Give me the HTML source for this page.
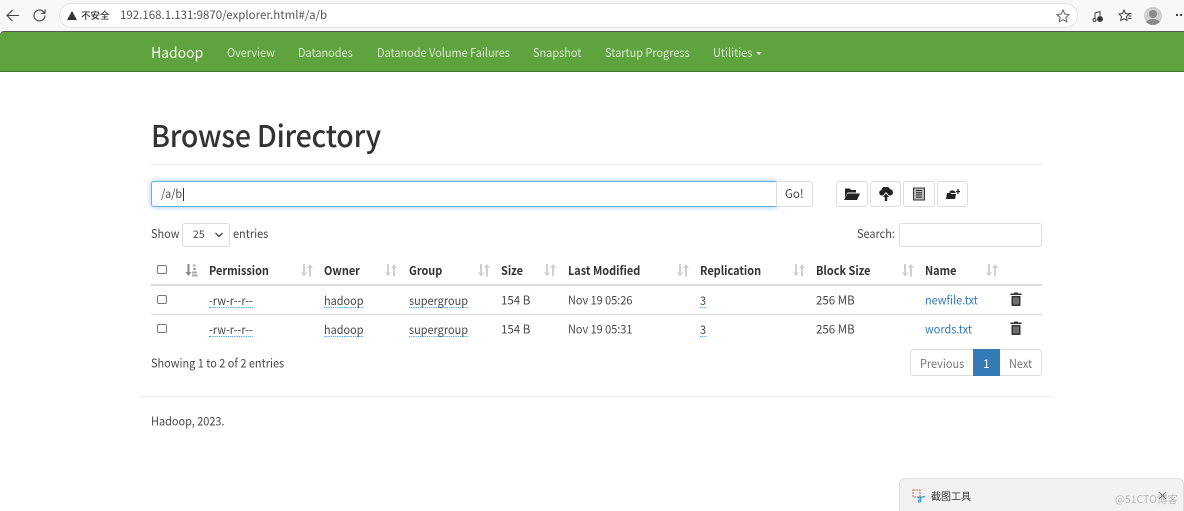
<!DOCTYPE html>
<html><head><meta charset="utf-8"><style>
*{box-sizing:border-box}
html,body{margin:0;padding:0;width:1184px;height:511px;overflow:hidden;background:#fff}
body{font-family:"Noto Sans CJK SC","Liberation Sans",sans-serif;font-size:12px;color:#484848;position:relative}
#w{position:absolute;left:0;top:0;width:1184px;height:511px;filter:blur(.35px)}
.t{position:absolute;white-space:nowrap;line-height:16px;height:16px;transform:scaleX(.91);transform-origin:left center}
.h{transform:translateY(-.5px) scaleX(.91)}
.r{transform:none}
.m{transform:translateY(-.5px) scaleX(.96)}
.b{font-weight:700;color:#333}
.u{border-bottom:1px dotted #2f9be8;line-height:13px;height:14px}
.l{color:#337ab7}
.n{color:#d8e8d0}
.btn{position:absolute;top:181px;height:26px;background:#fff;border:1px solid #ddd;border-radius:3px}
.btn svg{position:absolute;left:50%;top:50%;transform:translate(-50%,-50%)}
.cb{position:absolute;left:157px;width:10px;height:9px;border:1px solid #777;border-radius:2px;background:#fff}
.hr{position:absolute;height:1px}
.s{position:absolute;top:264px}
</style></head><body><div id="w">
<div style="position:absolute;left:0;top:0;width:1184px;height:31px;background:#f7f8f8"></div>
<svg style="position:absolute;left:5px;top:8px" width="16" height="15" viewBox="0 0 16 15" fill="none" stroke="#444" stroke-width="1.1"><path d="M14 7.500H2M7.500 2 2 7.500 7.500 13"/></svg>
<svg style="position:absolute;left:32px;top:8px" width="16" height="15" viewBox="0 0 16 15" fill="none" stroke="#444" stroke-width="1.1"><path d="M13 7.500a5.500 5.500 0 1 1-1.600-3.900L13 5.200M13 1.500v3.800H9.300"/></svg>
<div style="position:absolute;left:59px;top:3px;width:1019px;height:25px;background:#fff;border:1px solid #e2e3e4;border-radius:13px"></div>
<svg style="position:absolute;left:67px;top:11px" width="10" height="9" viewBox="0 0 10 9"><path d="M5 0 10 9H0z" fill="#333"/></svg>
<div class="t r" style="left:81px;top:7px;font-size:9.500px;font-weight:500;color:#333">不安全</div>
<div class="t r" style="left:120px;top:7px;font-size:11.500px;color:#555">192.168.1.131:9870/explorer.html#/a/b</div>
<svg style="position:absolute;left:1056px;top:9px" width="14" height="14" viewBox="0 0 14 14" fill="none" stroke="#666"><path d="M7 1 8.800 5 13 5.500 9.900 8.400 10.800 12.800 7 10.600 3.200 12.800 4.100 8.400 1 5.500 5.200 5z"/></svg>
<svg style="position:absolute;left:1092px;top:10px" width="12" height="13" viewBox="0 0 12 13" fill="none" stroke="#444"><path d="M3 9V3l5-1.500V7"/><circle cx="2.500" cy="10" r="1.500"/><circle cx="8" cy="9" r="2.500" fill="#333"/></svg>
<svg style="position:absolute;left:1118px;top:9px" width="14" height="14" viewBox="0 0 14 14" fill="none" stroke="#444"><path d="M6 1 7.500 4.500 11 5 8.500 7.500 9 11.500 6 9.800 2.800 11.500 3.500 7.500 1 5 4.500 4.500zM10 4.500h3.500M10.500 7h3M10 9.500h3.500"/></svg>
<div style="position:absolute;left:1144px;top:7px;width:18px;height:18px;border-radius:50%;background:#cfcfcf;overflow:hidden"><div style="position:absolute;left:5px;top:3px;width:8px;height:8px;border-radius:50%;background:#8a8a8a"></div><div style="position:absolute;left:2px;top:12px;width:14px;height:8px;border-radius:50%;background:#8a8a8a"></div></div>
<div style="position:absolute;left:1176px;top:14px;width:2px;height:2px;background:#444;box-shadow:4px 0 #444"></div>

<div style="position:absolute;left:0;top:31px;width:1184px;height:41px;background:#5fa33e;border-top:1px solid #555;border-bottom:1px solid #3f7a2a;border-radius:4px 0 0 0"></div>
<div class="t" style="left:151px;top:44px;font-size:15px;color:#f2f7ef;line-height:18px;height:18px;transform:scaleX(.93)">Hadoop</div>
<div class="t n" style="left:227px;top:45px">Overview</div>
<div class="t n" style="left:298px;top:45px">Datanodes</div>
<div class="t n" style="left:377px;top:45px">Datanode Volume Failures</div>
<div class="t n" style="left:533px;top:45px">Snapshot</div>
<div class="t n" style="left:604.500px;top:45px">Startup Progress</div>
<div class="t n" style="left:713px;top:45px">Utilities</div>
<div style="position:absolute;left:756px;top:52px;border:3.500px solid transparent;border-top-color:#d8e8d0;border-bottom:0"></div>

<div class="t" style="left:151px;top:112px;font-size:30px;line-height:44px;height:44px;color:#333;transform:scaleX(.95);font-weight:500;letter-spacing:-.25px">Browse Directory</div>
<div class="hr" style="left:151px;top:164px;width:891px;background:#eee"></div>

<div style="position:absolute;left:151px;top:181px;width:626px;height:26px;border:1px solid #66afe9;border-radius:3px 0 0 3px;box-shadow:0 0 6px rgba(102,175,233,.7);background:#fff"></div>
<div class="t" style="left:161px;top:186px">/a/b</div>
<div style="position:absolute;left:183px;top:188px;width:1px;height:13px;background:#333"></div>
<div class="btn" style="left:776px;width:37px;border-radius:0 3px 3px 0"></div>
<div class="t m" style="left:785px;top:186px;transform:scaleX(.96)">Go!</div>

<div class="btn" style="left:836px;width:32px"><svg width="16" height="13" viewBox="0 0 16 13"><path d="M1 1h5l1 1.500h5V5H3.500L1 10zM3.500 6H16l-3 6.500H0z" fill="#222"/></svg></div>
<div class="btn" style="left:870px;width:31px"><svg width="15" height="14" viewBox="0 0 15 14"><path d="M3 8.500A2.800 2.800 0 0 1 3 3a4.500 4.500 0 0 1 8.500-.800A3.200 3.200 0 0 1 12 8.500H10.500L7.500 5 4.500 8.500z" fill="#222"/><path d="M7.500 6.500 10.500 10H8.700V14H6.300V10H4.500z" fill="#222"/></svg></div>
<div class="btn" style="left:903px;width:32px"><svg width="12" height="13" viewBox="0 0 12 13"><path d="M.5.500h11v12H.5z" fill="#bbb" stroke="#333"/><path d="M3 3h6M3 5.200h6M3 7.400h6M3 9.600h6" stroke="#222"/></svg></div>
<div class="btn" style="left:937px;width:31px"><svg width="14" height="12" viewBox="0 0 14 12"><path d="M1 5h3.500l1 1h4.500L9 11H0z" fill="#222"/><path d="M3 4.500C3.500 3 6 1.500 8.500 3L10 5H6z" fill="#222"/><path d="M12 1v5M10 3.500H14" stroke="#222" stroke-width="1.300"/></svg></div>

<div class="t" style="left:151px;top:226px">Show</div>
<div style="position:absolute;left:182px;top:223px;width:48px;height:24px;border:1px solid #ddd;border-radius:3px"></div>
<div class="t r" style="left:193px;top:227px;font-size:10.500px">25</div>
<svg style="position:absolute;left:215px;top:232px" width="8" height="6" viewBox="0 0 8 6" fill="none" stroke="#444" stroke-width="1.300"><path d="M.5 1 4 4.500 7.500 1"/></svg>
<div class="t" style="left:233px;top:226px">entries</div>
<div class="t" style="left:857px;top:226px">Search:</div>
<div style="position:absolute;left:899px;top:223px;width:143px;height:24px;border:1px solid #ddd;border-radius:3px"></div>

<div class="cb" style="top:265px"></div>
<svg class="s" style="left:185px" width="13" height="13" viewBox="0 0 13 13"><path d="M3.500 0v8" stroke="#888" stroke-width="2"/><path d="M.5 8h6L3.500 12z" fill="#888"/><path d="M8 1.500h2.500M8 5h3M7 8.500h5M7 11.500h5.500" stroke="#aaa" stroke-width="2"/></svg>
<div class="t b" style="left:209px;top:263px">Permission</div>
<div class="t b" style="left:324px;top:263px">Owner</div>
<div class="t b" style="left:409px;top:263px">Group</div>
<div class="t b" style="left:501px;top:263px">Size</div>
<div class="t b" style="left:568px;top:263px">Last Modified</div>
<div class="t b" style="left:700px;top:263px">Replication</div>
<div class="t b" style="left:816px;top:263px">Block Size</div>
<div class="t b" style="left:925px;top:263px">Name</div>
<svg class="s" style="left:301px" width="12" height="13" viewBox="0 0 12 13"><path d="M3 0v9" stroke="#d0d0d0" stroke-width="2"/><path d="M0 8.500h6L3 12.500z" fill="#d0d0d0"/><path d="M9 12.500V4" stroke="#d0d0d0" stroke-width="2"/><path d="M6 4h6L9 0z" fill="#d0d0d0"/></svg>
<svg class="s" style="left:385px" width="12" height="13" viewBox="0 0 12 13"><path d="M3 0v9" stroke="#d0d0d0" stroke-width="2"/><path d="M0 8.500h6L3 12.500z" fill="#d0d0d0"/><path d="M9 12.500V4" stroke="#d0d0d0" stroke-width="2"/><path d="M6 4h6L9 0z" fill="#d0d0d0"/></svg>
<svg class="s" style="left:478px" width="12" height="13" viewBox="0 0 12 13"><path d="M3 0v9" stroke="#d0d0d0" stroke-width="2"/><path d="M0 8.500h6L3 12.500z" fill="#d0d0d0"/><path d="M9 12.500V4" stroke="#d0d0d0" stroke-width="2"/><path d="M6 4h6L9 0z" fill="#d0d0d0"/></svg>
<svg class="s" style="left:544px" width="12" height="13" viewBox="0 0 12 13"><path d="M3 0v9" stroke="#d0d0d0" stroke-width="2"/><path d="M0 8.500h6L3 12.500z" fill="#d0d0d0"/><path d="M9 12.500V4" stroke="#d0d0d0" stroke-width="2"/><path d="M6 4h6L9 0z" fill="#d0d0d0"/></svg>
<svg class="s" style="left:677px" width="12" height="13" viewBox="0 0 12 13"><path d="M3 0v9" stroke="#d0d0d0" stroke-width="2"/><path d="M0 8.500h6L3 12.500z" fill="#d0d0d0"/><path d="M9 12.500V4" stroke="#d0d0d0" stroke-width="2"/><path d="M6 4h6L9 0z" fill="#d0d0d0"/></svg>
<svg class="s" style="left:793px" width="12" height="13" viewBox="0 0 12 13"><path d="M3 0v9" stroke="#d0d0d0" stroke-width="2"/><path d="M0 8.500h6L3 12.500z" fill="#d0d0d0"/><path d="M9 12.500V4" stroke="#d0d0d0" stroke-width="2"/><path d="M6 4h6L9 0z" fill="#d0d0d0"/></svg>
<svg class="s" style="left:902px" width="12" height="13" viewBox="0 0 12 13"><path d="M3 0v9" stroke="#d0d0d0" stroke-width="2"/><path d="M0 8.500h6L3 12.500z" fill="#d0d0d0"/><path d="M9 12.500V4" stroke="#d0d0d0" stroke-width="2"/><path d="M6 4h6L9 0z" fill="#d0d0d0"/></svg>
<svg class="s" style="left:986px" width="12" height="13" viewBox="0 0 12 13"><path d="M3 0v9" stroke="#d0d0d0" stroke-width="2"/><path d="M0 8.500h6L3 12.500z" fill="#d0d0d0"/><path d="M9 12.500V4" stroke="#d0d0d0" stroke-width="2"/><path d="M6 4h6L9 0z" fill="#d0d0d0"/></svg>
<div class="hr" style="left:151px;top:284px;width:891px;height:2px;background:#ddd"></div>

<div class="cb" style="top:295px"></div>
<div class="t u" style="left:209px;top:294px">-rw-r--r--</div>
<div class="t u" style="left:324px;top:294px">hadoop</div>
<div class="t u" style="left:409px;top:294px">supergroup</div>
<div class="t m" style="left:501px;top:293px">154 B</div>
<div class="t h" style="left:568px;top:293px">Nov 19 05:26</div>
<div class="t u" style="left:700px;top:294px">3</div>
<div class="t m" style="left:816px;top:293px">256 MB</div>
<div class="t l h" style="left:925px;top:293px">newfile.txt</div>
<svg style="position:absolute;left:1010px;top:292px" width="12" height="14" viewBox="0 0 12 14"><path d="M4 1.500V.5h4v1h3.500V3H.5V1.500zM1.500 4h9v9a1 1 0 0 1-1 1h-7a1 1 0 0 1-1-1z" fill="#333"/><path d="M4 5.500V12.500M6 5.500V12.500M8 5.500V12.500" stroke="#aaa"/></svg>
<div class="hr" style="left:151px;top:314px;width:891px;background:#ddd"></div>

<div class="cb" style="top:324px"></div>
<div class="t u" style="left:209px;top:323px">-rw-r--r--</div>
<div class="t u" style="left:324px;top:323px">hadoop</div>
<div class="t u" style="left:409px;top:323px">supergroup</div>
<div class="t m" style="left:501px;top:322px">154 B</div>
<div class="t h" style="left:568px;top:322px">Nov 19 05:31</div>
<div class="t u" style="left:700px;top:323px">3</div>
<div class="t m" style="left:816px;top:322px">256 MB</div>
<div class="t l h" style="left:925px;top:322px">words.txt</div>
<svg style="position:absolute;left:1010px;top:321px" width="12" height="14" viewBox="0 0 12 14"><path d="M4 1.500V.5h4v1h3.500V3H.5V1.500zM1.500 4h9v9a1 1 0 0 1-1 1h-7a1 1 0 0 1-1-1z" fill="#333"/><path d="M4 5.500V12.500M6 5.500V12.500M8 5.500V12.500" stroke="#aaa"/></svg>

<div class="t h" style="left:151px;top:356px">Showing 1 to 2 of 2 entries</div>
<div style="position:absolute;left:910px;top:349px;width:132px;height:27px;border:1px solid #ddd;border-radius:3px"></div>
<div style="position:absolute;left:973px;top:349px;width:27px;height:27px;background:#337ab7"></div>
<div class="t" style="left:920px;top:356px;color:#777">Previous</div>
<div class="t r" style="left:983px;top:356px;color:#fff">1</div>
<div class="t" style="left:1009px;top:356px;color:#777">Next</div>

<div class="hr" style="left:140px;top:396px;width:914px;background:#eee"></div>
<div class="t h" style="left:151px;top:414px">Hadoop, 2023.</div>

<div style="position:absolute;left:899px;top:478px;width:285px;height:40px;background:#f2f2f2;border:1px solid #ddd;border-radius:6px"></div>
<svg style="position:absolute;left:912px;top:489px" width="14" height="14" viewBox="0 0 14 14" fill="none"><rect x="1" y="1" width="7" height="7" stroke="#c8553d" stroke-dasharray="2 1"/><path d="M6 9 13 7.500M9 8.500 8 12" stroke="#2f9bd8" stroke-width="1.200"/><circle cx="7.500" cy="12" r="1.300" stroke="#2f9bd8"/></svg>
<div class="t r" style="left:931px;top:488px;font-size:10px;color:#333">截图工具</div>
<div class="t r" style="left:1115px;top:492px;font-size:10.500px;color:#bbb">@51CTO博客</div>
<svg style="position:absolute;left:1158px;top:491px" width="9" height="9" viewBox="0 0 9 9" stroke="#777"><path d="M1 1 8 8M8 1 1 8"/></svg>
</div></body></html>
